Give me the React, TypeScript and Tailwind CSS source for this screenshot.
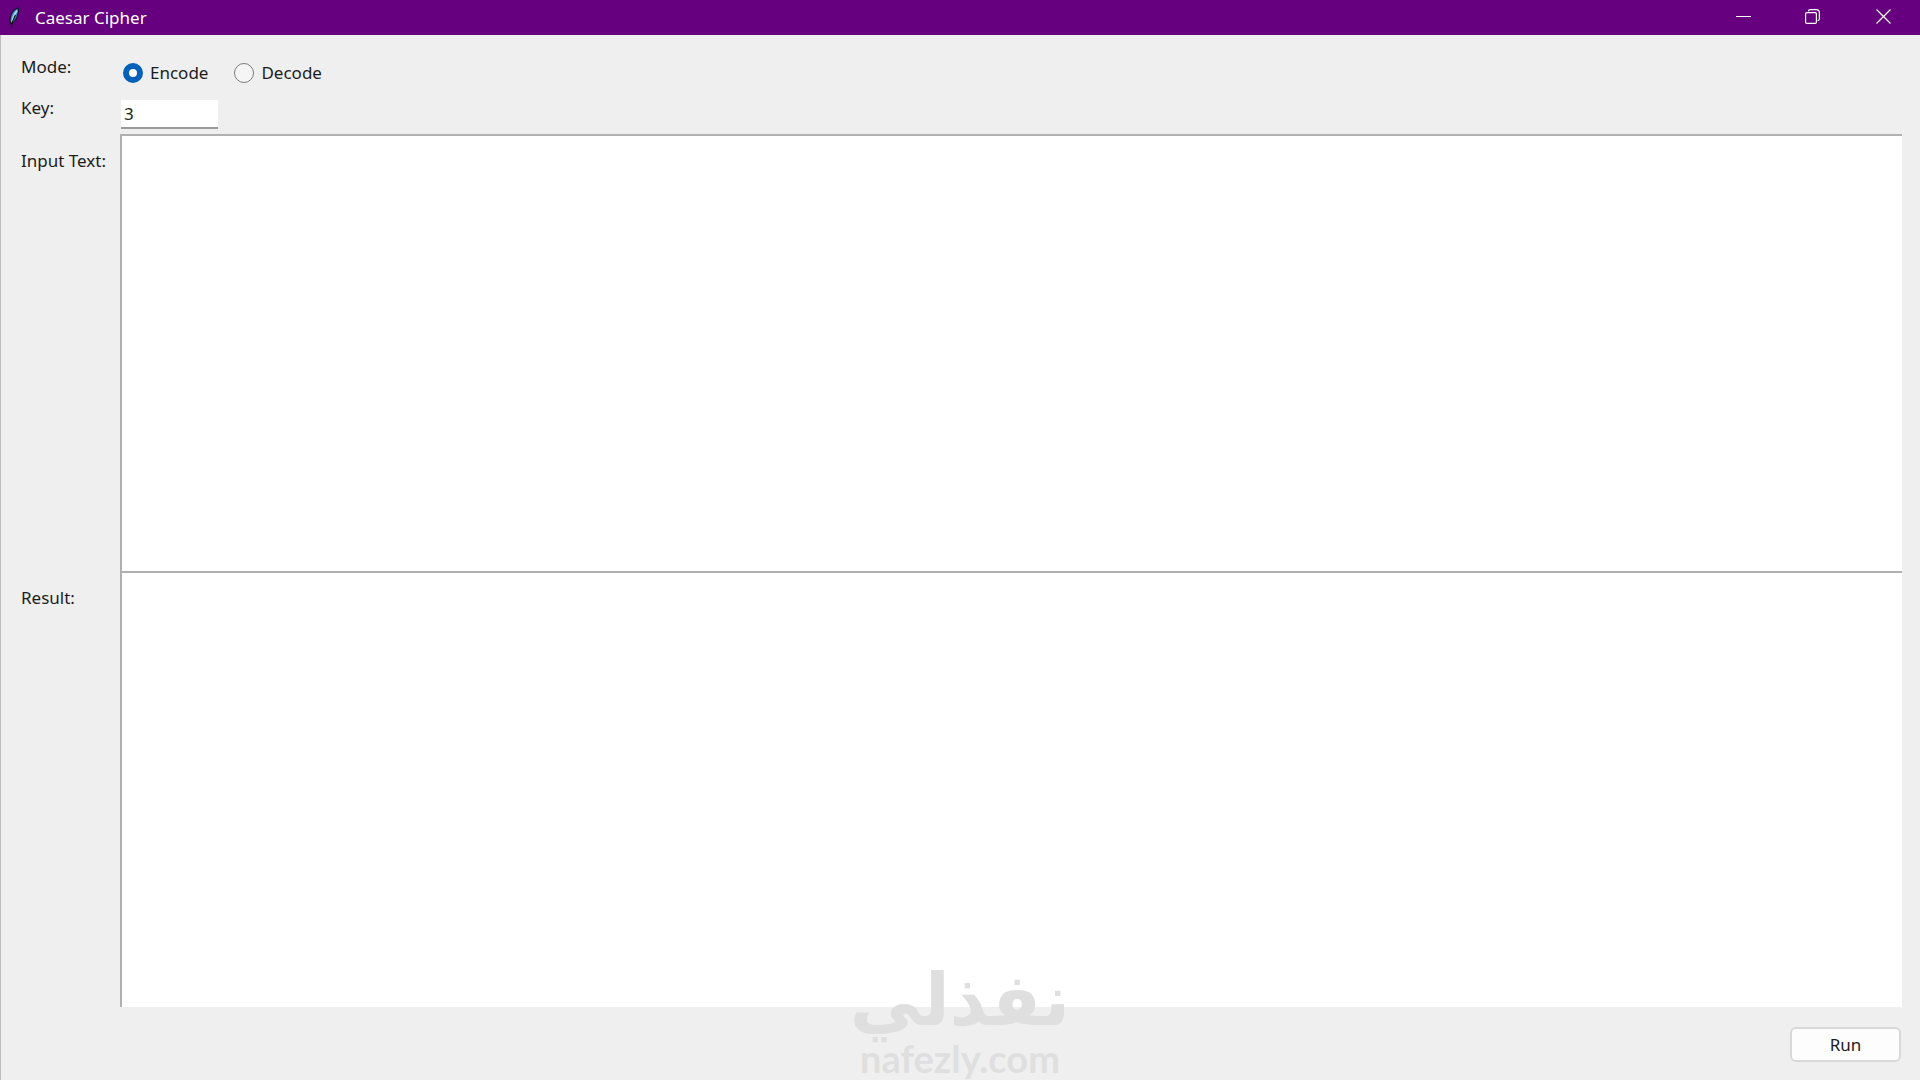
import { useState } from "react";

type Mode = "encode" | "decode";

const MODES: { value: Mode; label: string }[] = [
  { value: "encode", label: "Encode" },
  { value: "decode", label: "Decode" },
];

function shift(text: string, key: number) {
  return text.replace(/[a-z]/gi, (ch) => {
    const base = ch <= "Z" ? 65 : 97;
    return String.fromCharCode(((((ch.charCodeAt(0) - base + key) % 26) + 26) % 26) + base);
  });
}

function FeatherIcon() {
  return (
    <svg width="12" height="22" viewBox="0 0 12 22" aria-hidden="true">
      <path
        d="M10.6 1C7 1.6 3.6 5 2.4 10C1.8 13 1.8 15 2.8 17C6.6 15.4 8.6 12 9.6 8.4C10.6 5.4 10.8 3 10.6 1Z"
        fill="#4478b4"
        stroke="#141430"
        strokeWidth="1.2"
      />
      <path d="M9 3.6C6.2 7 4.6 11 4 15" fill="none" stroke="#a9d3f2" strokeWidth="1.8" />
      <path d="M7.4 8L4 16L3.6 21.5" fill="none" stroke="#10101c" strokeWidth="1.1" />
    </svg>
  );
}

function TitleBar() {
  return (
    <header className="flex h-[35px] items-center bg-[#66007f] text-white">
      <div className="flex flex-1 items-center gap-[15px] pl-2">
        <FeatherIcon />
        <h1 className="text-[17px] leading-6">Caesar Cipher</h1>
      </div>
      <div className="flex h-full pb-0.5">
        <button type="button" aria-label="Minimize" className="flex h-full w-[70px] items-center justify-center">
          <svg width="15" height="15" viewBox="0 0 15 15" fill="none" stroke="currentColor">
            <path d="M0 7.5H15" />
          </svg>
        </button>
        <button type="button" aria-label="Restore" className="flex h-full w-[69px] items-center justify-center">
          <svg width="15" height="15" viewBox="0 0 15 15" fill="none" stroke="currentColor" strokeWidth="1.2">
            <rect x="0.6" y="3.6" width="10.8" height="10.8" rx="1.2" />
            <path d="M3.4 2.4Q3.6 0.6 5.4 0.6H11.2Q14.4 0.6 14.4 3.8V9.4Q14.4 11.4 12.6 11.6" />
          </svg>
        </button>
        <button type="button" aria-label="Close" className="flex h-full w-[73px] items-center justify-center">
          <svg width="15" height="15" viewBox="0 0 15 15" fill="none" stroke="currentColor" strokeWidth="1.2">
            <path d="M0.5 0.5L14.5 14.5M14.5 0.5L0.5 14.5" />
          </svg>
        </button>
      </div>
    </header>
  );
}

function Watermark() {
  return (
    <div className="pointer-events-none absolute inset-x-0 bottom-0 flex flex-col items-center text-[#dfdfdf]">
      <span lang="ar" dir="rtl" className="font-['DejaVu_Sans',sans-serif] text-[72px] leading-[72px] font-bold">
        نفذلي
      </span>
      <span className="font-[Lato,sans-serif] text-[38px] leading-[44px] font-bold">nafezly.com</span>
    </div>
  );
}

export default function App() {
  const [mode, setMode] = useState<Mode>("encode");
  const [key, setKey] = useState("3");
  const [input, setInput] = useState("");
  const [result, setResult] = useState("");

  const run = () => {
    const n = parseInt(key, 10) || 0;
    setResult(shift(input, mode === "encode" ? n : -n));
  };

  return (
    <div className="relative flex min-h-screen flex-col bg-[#efefef] font-['Noto_Sans',sans-serif] text-[17px] leading-6 text-[#1c1c1c]">
      <TitleBar />
      <main className="grid flex-1 grid-cols-[99px_1fr] grid-rows-[auto_auto_1fr_1fr_auto] border-l border-[#bdbdbd] pr-[18px] pl-5">
        <span id="mode-label" className="pt-5">
          Mode:
        </span>
        <div role="radiogroup" aria-labelledby="mode-label" className="flex gap-[26px] pt-[26px] pb-[9px] pl-[3px]">
          {MODES.map(({ value, label }) => (
            <label key={value} className="flex items-center gap-[7px]">
              <input
                type="radio"
                name="mode"
                value={value}
                checked={mode === value}
                onChange={() => setMode(value)}
                className="size-5 appearance-none rounded-full border border-[#7b7b7b] bg-[#f5f5f5] checked:border-[6px] checked:border-[#0560b8] checked:bg-white"
              />
              {label}
            </label>
          ))}
        </div>

        <label htmlFor="key" className="pt-0.5">
          Key:
        </label>
        <div className="flex pt-1.5 pb-[5px] pl-px">
          <input
            id="key"
            value={key}
            onChange={(e) => setKey(e.target.value)}
            className="h-[29px] w-[97px] border-b-2 border-[#9a9a9a] bg-white px-[3px] outline-none"
          />
        </div>

        <label htmlFor="input-text" className="pt-[15px]">
          Input Text:
        </label>
        <textarea
          id="input-text"
          value={input}
          onChange={(e) => setInput(e.target.value)}
          className="resize-none border-t-2 border-l-2 border-[#b0b0b0] bg-white p-1 outline-none"
        />

        <label htmlFor="result" className="pt-[15px]">
          Result:
        </label>
        <textarea
          id="result"
          value={result}
          readOnly
          className="resize-none border-t-2 border-l-2 border-[#b0b0b0] bg-white p-1 outline-none"
        />

        <div className="col-span-2 flex justify-end pt-5 pr-px pb-[18px]">
          <button
            type="button"
            onClick={run}
            className="h-[35px] w-[111px] rounded-md border-2 border-[#d8d8d8] bg-[#fdfdfd]"
          >
            Run
          </button>
        </div>
      </main>
      <Watermark />
    </div>
  );
}
